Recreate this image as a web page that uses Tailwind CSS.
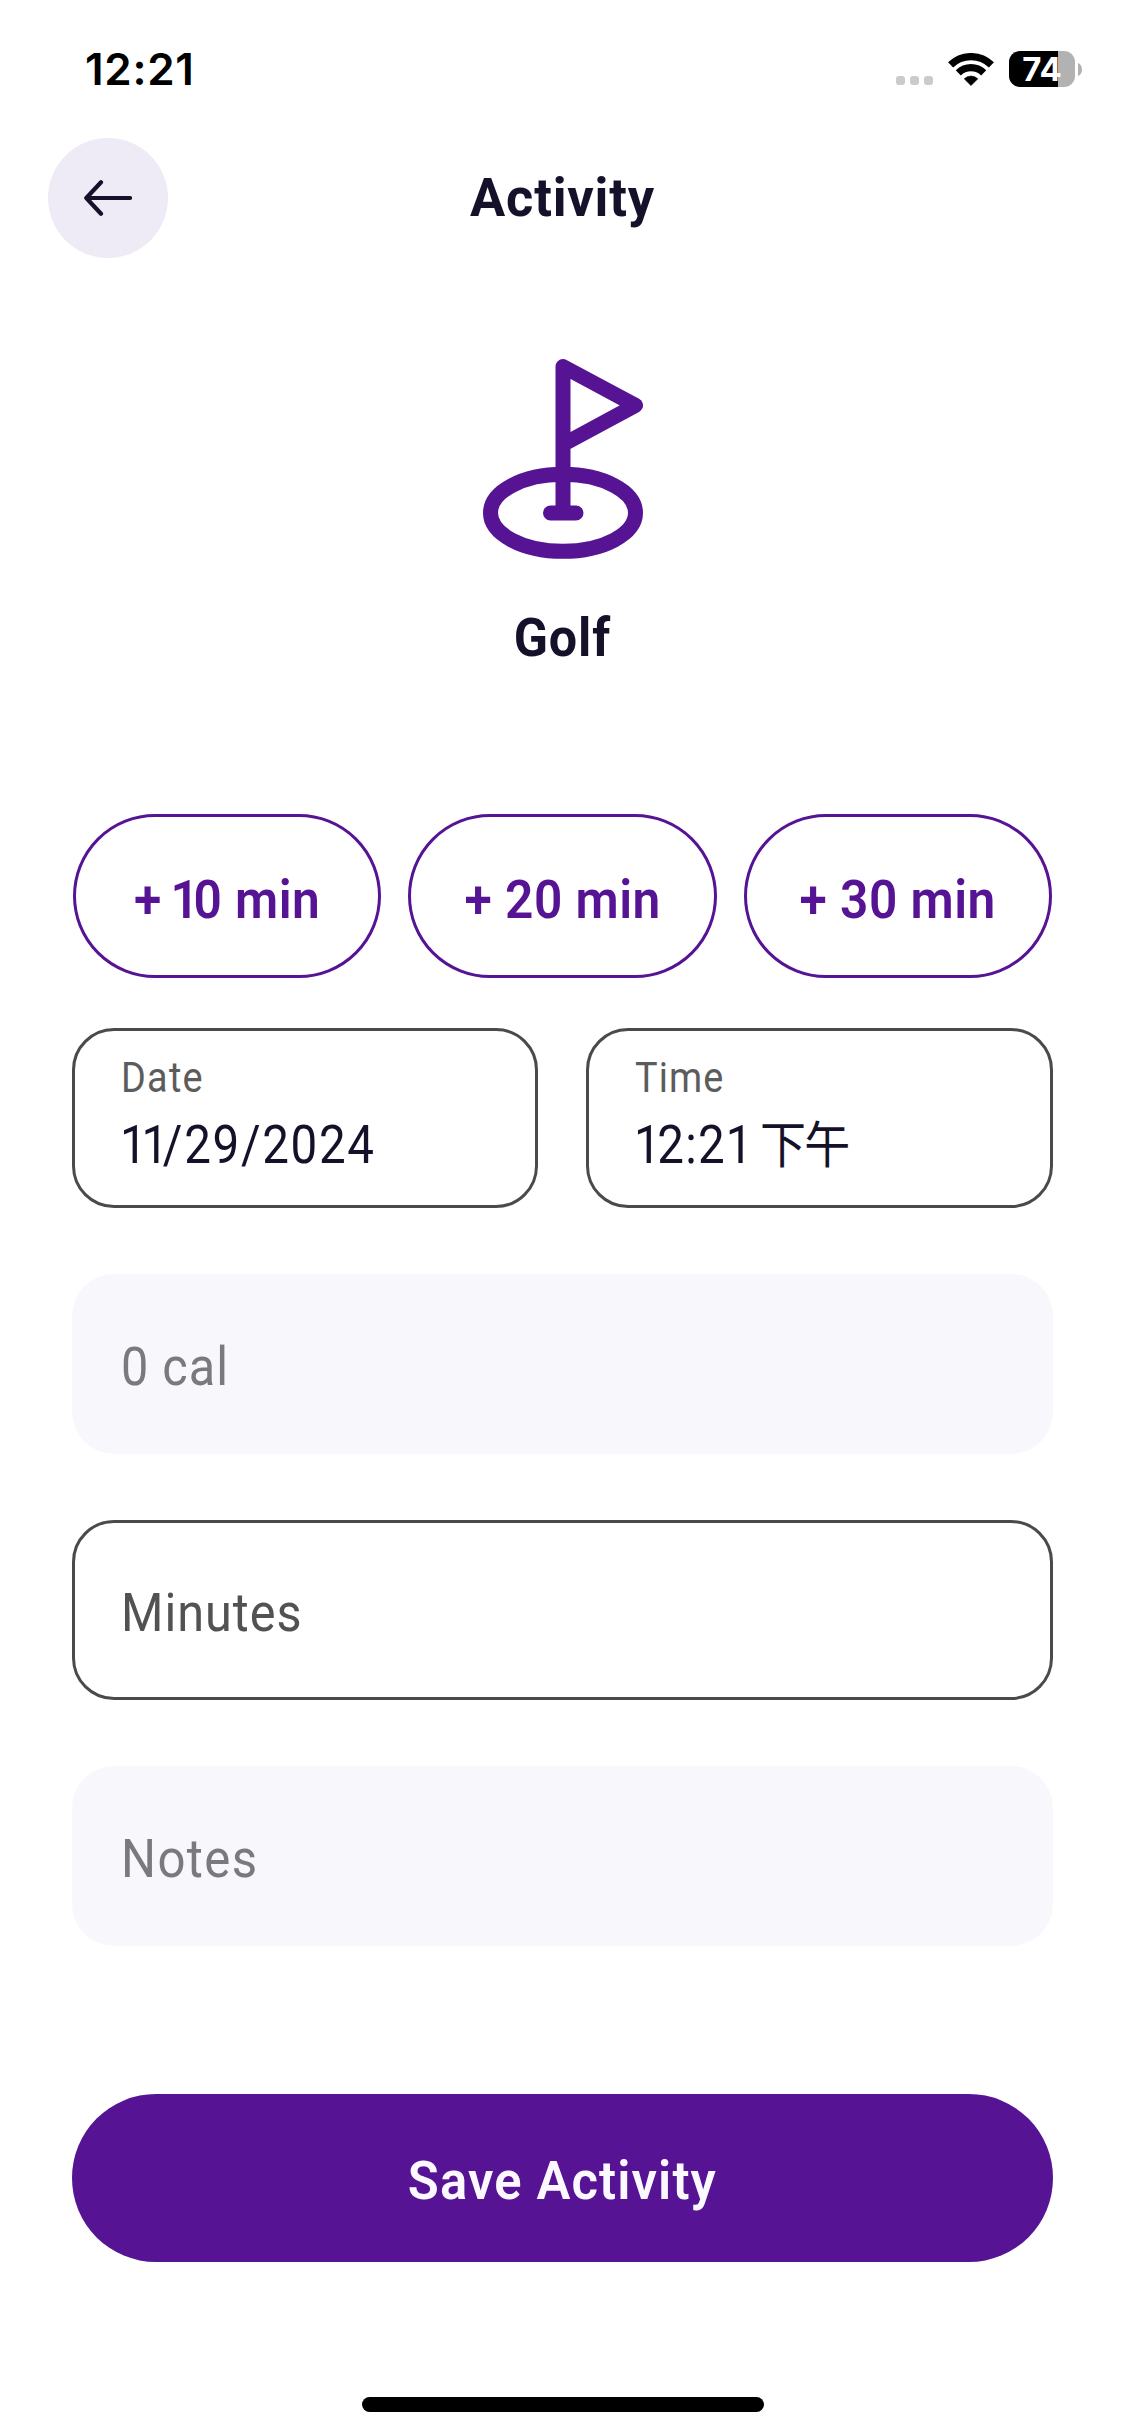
<!DOCTYPE html>
<html lang="en">
<head>
<meta charset="utf-8">
<title>Activity</title>
<script src="https://cdn.jsdelivr.net/npm/@tailwindcss/browser@4"></script>
</head>
<body class="bg-white">
<div class="flex h-[2436px] w-[1125px] flex-col overflow-hidden bg-white font-['Roboto','Noto_Sans_CJK_SC',sans-serif] text-[54px] leading-[60px] text-[#15112a]">

  <!-- Status bar -->
  <div class="flex h-[138px] items-center justify-between pr-[43px] pl-[85px] text-black">
    <div class="font-['Inter',sans-serif] text-[44px] font-semibold tracking-[0.7px]">12:21</div>
    <div class="flex items-center">
      <div class="mt-[22px] flex gap-[5px]">
        <span class="size-[9px] rounded-[3px] bg-[#cbcbcb]"></span>
        <span class="size-[9px] rounded-[3px] bg-[#cbcbcb]"></span>
        <span class="size-[9px] rounded-[3px] bg-[#cbcbcb]"></span>
      </div>
      <svg class="ml-[15px] h-[33px] w-[46px]" viewBox="0 0 46 33" fill="none">
        <path d="M2.6 11.9A29.3 29.3 0 0 1 43.4 11.9M10.3 19.8A18.3 18.3 0 0 1 35.7 19.8" stroke="#000" stroke-width="7.3"/>
        <path d="M23 32.6L16.2 25.8A9.8 9.8 0 0 1 29.8 25.8Z" fill="#000" stroke="#000" stroke-width=".6" stroke-linejoin="round"/>
      </svg>
      <div class="ml-[15px] flex h-9 w-[66px] items-center justify-center rounded-[11px] bg-linear-to-r from-black from-[49px] to-[#b2b2b2] to-[49px]">
        <span class="font-['Inter',sans-serif] text-[33px] leading-9 font-bold text-white">74</span>
      </div>
      <svg class="ml-[3px] h-[13px] w-1" viewBox="0 0 4 13"><path d="M0 0C5.3 2 5.3 11 0 13Z" fill="#b2b2b2"/></svg>
    </div>
  </div>

  <!-- Header -->
  <header class="grid h-[120px] grid-cols-[120px_1fr_120px] items-center px-12">
    <button class="flex size-[120px] items-center justify-center rounded-full bg-[#eeeaf6]">
      <svg class="size-12" viewBox="0 0 48 48" fill="none" stroke="#15112a" stroke-width="4.2" stroke-linecap="round" stroke-linejoin="round"><path d="M46 24H2.3M17 8.2L2.3 24L17 39.8"/></svg>
    </button>
    <h1 class="scale-x-[.97] text-center font-bold tracking-[0.8px]">Activity</h1>
  </header>

  <!-- Selected activity -->
  <section class="mt-[101px] flex flex-col items-center">
    <svg class="h-[200px] w-[160px]" viewBox="0 0 160 200" fill="none" stroke="#561393" stroke-width="15" stroke-linecap="round" stroke-linejoin="round">
      <path d="M80 154V7.5L152.5 46.3L80 85.5M67.5 154H93"/>
      <ellipse cx="80" cy="153.8" rx="72.5" ry="38.5"/>
    </svg>
    <h2 class="mt-[49px] scale-x-[.93] font-bold tracking-[1px]">Golf</h2>
  </section>

  <!-- Quick durations -->
  <div class="mt-[146px] grid grid-cols-3 gap-[27px] px-[73px] font-semibold text-[#561393]">
    <button class="flex h-[164px] items-center justify-center rounded-full border-3 border-[#561393] pt-[7px]"><span class="scale-x-[.92] tracking-[0.5px]">+<span class="tracking-[-4px]"> </span><span class="tracking-[-6px]">1</span>0 min</span></button>
    <button class="flex h-[164px] items-center justify-center rounded-full border-3 border-[#561393] pt-[7px]"><span class="scale-x-[.92] tracking-[0.5px]">+ 20 min</span></button>
    <button class="flex h-[164px] items-center justify-center rounded-full border-3 border-[#561393] pt-[7px]"><span class="scale-x-[.92] tracking-[0.5px]">+ 30 min</span></button>
  </div>

  <!-- Form -->
  <div class="mt-[50px] flex flex-col gap-[66px] px-[72px]">
    <div class="flex justify-between">
      <div class="flex h-[180px] w-[466px] flex-col gap-[13px] rounded-[42px] border-3 border-[#4a4a4a] px-[45px] pt-[23px]">
        <span class="ml-px origin-left scale-x-[.9] text-[42px] leading-12 tracking-[1.4px] text-[#5c5c5c]">Date</span>
        <span class="origin-left scale-x-[.88]"><span class="tracking-[-6px]">11</span><span class="tracking-[1.9px]">/29/2024</span></span>
      </div>
      <div class="flex h-[180px] w-[467px] flex-col gap-[13px] rounded-[42px] border-3 border-[#4a4a4a] px-[45px] pt-[23px]">
        <span class="ml-px origin-left scale-x-[.9] text-[42px] leading-12 tracking-[1.2px] text-[#5c5c5c]">Time</span>
        <div class="flex items-baseline">
          <span class="w-[126px] origin-left scale-x-[.88] whitespace-nowrap"><span class="tracking-[-4px]">1</span><span class="tracking-[1.4px]">2:21</span></span>
          <span class="origin-left scale-x-[.92] font-['Noto_Sans_CJK_SC',sans-serif] text-[50px] leading-none tracking-[-2px]">下午</span>
        </div>
      </div>
    </div>
    <div class="flex h-[180px] items-center rounded-[42px] bg-[#f8f7fc] px-[49px] pt-[6px] text-[#7a7a7d]"><span class="origin-left scale-x-[.9] tracking-[1.1px]">0 cal</span></div>
    <div class="flex h-[180px] items-center rounded-[42px] border-3 border-[#4a4a4a] px-[46px] pt-[6px] text-[#525252]"><span class="origin-left scale-x-[.9] tracking-[1.1px]">Minutes</span></div>
    <div class="flex h-[180px] items-center rounded-[42px] bg-[#f8f7fc] px-[49px] pt-[6px] text-[#7a7a7d]"><span class="origin-left scale-x-[.91] tracking-[1.5px]">Notes</span></div>
    <button class="mt-[82px] flex h-[168px] items-center justify-center rounded-full bg-[#561393] pt-[6px] font-semibold text-[#fbf8ff]"><span class="scale-x-[.94] tracking-[1.2px]">Save Activity</span></button>
  </div>

  <!-- Home indicator -->
  <div class="mt-[135px] ml-[362px] h-[15px] w-[402px] rounded-full bg-black"></div>
</div>
</body>
</html>
